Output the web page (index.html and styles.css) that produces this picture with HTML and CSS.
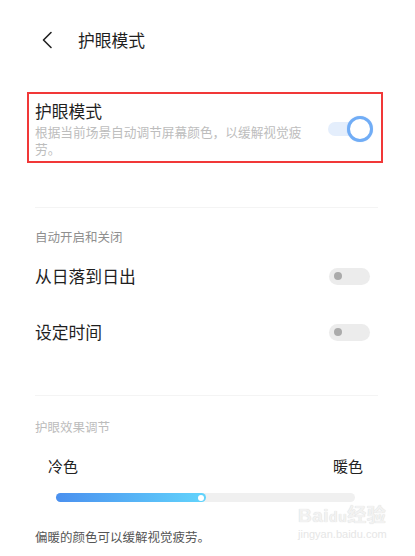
FILE: index.html
```html
<!DOCTYPE html>
<html lang="zh-CN">
<head>
<meta charset="utf-8">
<link rel="stylesheet" href="styles.css">
</head>
<body>
<div class="page">
  <header class="topbar">
    <svg class="back" width="12" height="18" viewBox="0 0 12 18"><path d="M10 1.5 L2.5 9 L10 16.5" fill="none" stroke="#222" stroke-width="1.6" stroke-linecap="round" stroke-linejoin="round"/></svg>
    <span class="title">护眼模式</span>
  </header>

  <section class="hero">
    <div class="hero-text">
      <div class="hero-title">护眼模式</div>
      <div class="hero-desc">根据当前场景自动调节屏幕颜色，以缓解视觉疲劳。</div>
    </div>
    <div class="switch on"><span class="knob"></span></div>
  </section>

  <div class="divider first"></div>

  <div class="label auto">自动开启和关闭</div>
  <div class="row">
    <span class="row-text">从日落到日出</span>
    <div class="switch off"><span class="knob"></span></div>
  </div>
  <div class="row">
    <span class="row-text">设定时间</span>
    <div class="switch off"><span class="knob"></span></div>
  </div>

  <div class="divider second"></div>

  <div class="label effect">护眼效果调节</div>
  <div class="temps">
    <span>冷色</span>
    <span>暖色</span>
  </div>
  <div class="slider">
    <div class="fill" style="width:50%"><span class="thumb"></span></div>
  </div>
  <p class="note">偏暖的颜色可以缓解视觉疲劳。</p>

  <div class="watermark">
    <div class="wm-top">Bai<span class="wm-du">du</span>经验</div>
    <div class="wm-bottom">jingyan.baidu.com</div>
  </div>
</div>
</body>
</html>
```

FILE: styles.css
```css
* { box-sizing: border-box; }
html, body { margin: 0; padding: 0; background: #fff; }
body {
  font-family: "Noto Sans CJK SC", "Noto Sans", sans-serif;
  color: #1f1f1f;
}
.page { position: relative; width: 415px; height: 556px; overflow: hidden; }

.topbar {
  height: 80px;
  display: flex;
  align-items: center;
  padding-left: 41px;
}
.back { display: block; }
.title {
  margin-left: 25px;
  font-size: 16.8px;
  line-height: 22px;
  color: #1f1f1f;
}

.hero {
  margin: 12px 32px 0 27px;
  height: 71px;
  border: 2.5px solid #f13838;
  padding: 6px 0 0 6px;
  display: flex;
  align-items: flex-start;
}
.hero-text { width: 282px; }
.hero-title { font-size: 16.8px; line-height: 23px; color: #1f1f1f; }
.hero-desc { font-size: 12.7px; line-height: 17px; color: #bdbdbd; }

.switch {
  position: relative;
  width: 41px;
  height: 17px;
  border-radius: 9px;
}
.switch.on {
  margin-top: 22px;
  margin-left: 11px;
  width: 40px;
  height: 14px;
  background: #e4eefc;
}
.switch.on .knob {
  position: absolute;
  right: -5px;
  top: -6px;
  width: 26px;
  height: 26px;
  border-radius: 50%;
  background: #fff;
  border: 3px solid #71adf6;
  box-shadow: 0 0 1px rgba(80,150,240,0.4);
}
.switch.off { background: #ececec; }
.switch.off .knob {
  position: absolute;
  left: 5px;
  top: 4.5px;
  width: 8px;
  height: 8px;
  border-radius: 50%;
  background: #ababab;
}

.divider { height: 1px; background: #f4f4f4; margin: 0 37px 0 35px; }
.divider.first { margin-top: 44px; }
.divider.second { margin-top: 35px; }

.label { padding-left: 35px; font-size: 12.5px; line-height: 18px; }
.label.auto { margin-top: 20px; color: #8f8f8f; }
.label.effect { margin-top: 22px; color: #bcbcbc; }

.row {
  height: 56px;
  margin-top: 2px;
  padding: 0 45px 0 35px;
  display: flex;
  align-items: center;
  justify-content: space-between;
}
.row + .row { margin-top: 0; }
.row-text { font-size: 16.8px; line-height: 22px; color: #1f1f1f; }

.temps {
  margin-top: 19px;
  padding: 0 52px 0 48px;
  display: flex;
  justify-content: space-between;
  font-size: 15px;
  line-height: 22px;
  color: #222;
}
.slider {
  margin: 16px 60px 0 56px;
  height: 9px;
  border-radius: 5px;
  background: #f0f0f0;
}
.fill {
  position: relative;
  height: 9px;
  border-radius: 5px;
  background: linear-gradient(90deg, #4a90ef, #62d4fc);
}
.thumb {
  position: absolute;
  right: 1.5px;
  top: 1.5px;
  width: 6px;
  height: 6px;
  border-radius: 50%;
  background: #fff;
}
.note {
  margin: 26px 0 0 35px;
  font-size: 12.5px;
  line-height: 18px;
  color: #555;
}

.watermark {
  position: absolute;
  left: 298px;
  top: 505px;
  color: #f2f2f2;
  text-shadow: 0 0 1px #d0d0d0;
  font-family: "Liberation Sans", "Noto Sans CJK SC", sans-serif;
}
.wm-top { font-size: 19px; line-height: 22px; font-weight: bold; letter-spacing: 0.5px; }
.wm-du { font-size: 14px; }
.wm-bottom { font-size: 11px; line-height: 13px; color: #e6e6e6; text-shadow: none; }
```
